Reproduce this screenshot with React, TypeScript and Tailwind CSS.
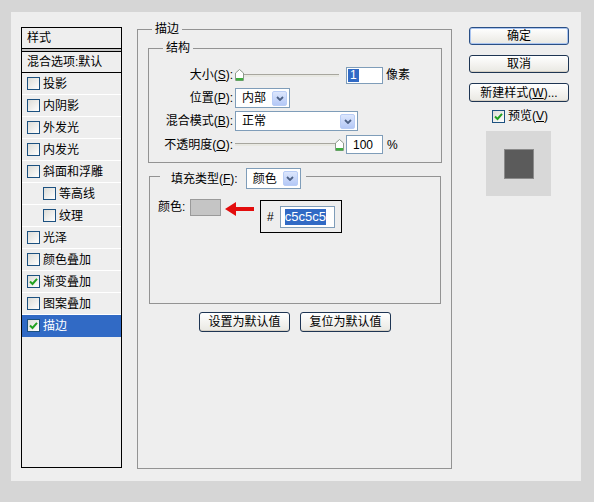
import type { ReactNode } from "react"

function Check({ checked }: { checked?: boolean }) {
  return (
    <span className="flex h-[13px] w-[13px] shrink-0 items-center justify-center border border-[#1c5180] bg-linear-to-br from-[#dcdcd7] to-white">
      {checked && (
        <svg width="9" height="9" viewBox="0 0 9 9">
          <path d="M1 4.5 L3.5 7 L8 1.8" fill="none" stroke="#21a121" strokeWidth="2" />
        </svg>
      )}
    </span>
  )
}

function Row({ label, checked, indent, selected }: { label: string; checked?: boolean; indent?: boolean; selected?: boolean }) {
  return (
    <div
      className={`flex h-[22px] items-center gap-[3px] border-b ${indent ? "pl-[21px]" : "pl-[5px]"} ${
        selected ? "border-[#316ac5] bg-[#316ac5] text-white" : "border-white"
      }`}
    >
      <Check checked={checked} />
      <span>{label}</span>
    </div>
  )
}

function DropBtn() {
  return (
    <span className="flex h-[15px] w-[15px] items-center justify-center rounded-[2px] border border-[#b9cdf6] bg-linear-to-b from-[#dde7fd] to-[#b4c8f6]">
      <svg width="8" height="5" viewBox="0 0 8 5">
        <path d="M1 1 L4 4 L7 1" fill="none" stroke="#4d6185" strokeWidth="1.8" />
      </svg>
    </span>
  )
}

function Select({ className, text }: { className: string; text: string }) {
  return (
    <div className={`flex items-center justify-between border border-[#7f9db9] bg-white pl-[6px] pr-[2px] ${className}`}>
      <span>{text}</span>
      <DropBtn />
    </div>
  )
}

function Thumb() {
  return (
    <svg width="9" height="12" viewBox="0 0 9 12" className="shrink-0">
      <path d="M0.5 4 L4.5 0.5 L8.5 4 V11.5 H0.5 Z" fill="#ffffff" stroke="#8c9a8c" />
      <rect x="1" y="9" width="7" height="2.5" fill="#3dae3d" />
    </svg>
  )
}

function Slider({ className, end }: { className: string; end?: boolean }) {
  return (
    <div className={`flex items-center ${className}`}>
      {end && <span className="h-[3px] flex-1 border-t border-[#a7a69e] border-b-white bg-[#e8e8e2]" />}
      <Thumb />
      {!end && <span className="h-[3px] flex-1 border-t border-[#a7a69e] border-b-white bg-[#e8e8e2]" />}
    </div>
  )
}

function Group({ legend, className, legendClass, children }: { legend: ReactNode; className: string; legendClass: string; children: ReactNode }) {
  return (
    <div className={`relative border border-[#939393] ${className}`}>
      <div className={`absolute flex items-center bg-[#eeeeee] ${legendClass}`}>{legend}</div>
      {children}
    </div>
  )
}

function Btn({ children, primary, className }: { children: ReactNode; primary?: boolean; className: string }) {
  return (
    <div
      className={`flex items-center justify-center rounded-[3px] border bg-linear-to-b from-white to-[#e9e8e2] leading-none ${
        primary ? "border-[#2a4f85] shadow-[inset_0_0_0_1px_#a9c4f0]" : "border-[#1e3553] shadow-[inset_0_-1px_0_#d6d0c5]"
      } ${className}`}
    >
      {children}
    </div>
  )
}

export default function App() {
  const rows = [
    { label: "投影" },
    { label: "内阴影" },
    { label: "外发光" },
    { label: "内发光" },
    { label: "斜面和浮雕" },
    { label: "等高线", indent: true },
    { label: "纹理", indent: true },
    { label: "光泽" },
    { label: "颜色叠加" },
    { label: "渐变叠加", checked: true },
    { label: "图案叠加" },
    { label: "描边", checked: true, selected: true },
  ]

  return (
    <div className="h-[502px] w-[594px] bg-[#d6d6d6] pl-[11px] pt-[12px] font-['Liberation_Sans','Noto_Sans_CJK_SC',sans-serif] text-[12px] text-black">
      <div className="flex h-[469px] w-[570px] bg-[#eeeeee] pl-[10px] pt-[15px]">
        {/* style list */}
        <div className="h-[441px] w-[101px] shrink-0 border border-black">
          <div className="flex h-[21px] items-center border-b border-black pl-[5px]">样式</div>
          <div className="h-[2px] bg-[#c4c4c4]" />
          <div className="flex h-[22px] items-center border-y border-black pl-[5px]">混合选项:默认</div>
          {rows.map((r) => (
            <Row key={r.label} {...r} />
          ))}
        </div>

        {/* stroke settings */}
        <Group
          legend={<span className="px-[3px] leading-[16px]">描边</span>}
          className="ml-[15px] mt-[2px] h-[440px] w-[315px] shrink-0 pl-[10px] pr-[9px] pt-[18px]"
          legendClass="-top-[9px] left-[14px]"
        >
          <Group
            legend={<span className="px-[3px] leading-[16px]">结构</span>}
            className="h-[115px] pt-[17px]"
            legendClass="-top-[9px] left-[14px]"
          >
            <div className="flex h-[18px] items-center">
              <span className="w-[84px] text-right">
                大小(<u>S</u>):
              </span>
              <Slider className="ml-[2px] w-[104px]" />
              <div className="ml-[7px] flex h-[17px] w-[37px] items-center border border-[#7f9db9] bg-white pl-[1px]">
                <span className="h-[13px] bg-[#316ac5] px-[2px] leading-[13px] text-white">1</span>
              </div>
              <span className="ml-[3px]">像素</span>
            </div>
            <div className="mt-[4px] flex h-[20px] items-center">
              <span className="w-[84px] text-right">
                位置(<u>P</u>):
              </span>
              <Select className="ml-[2px] h-[20px] w-[55px]" text="内部" />
            </div>
            <div className="mt-[3px] flex h-[20px] items-center">
              <span className="w-[84px] text-right">
                混合模式(<u>B</u>):
              </span>
              <Select className="ml-[2px] h-[20px] w-[123px]" text="正常" />
            </div>
            <div className="mt-[4px] flex h-[19px] items-center">
              <span className="w-[84px] text-right">
                不透明度(<u>O</u>):
              </span>
              <Slider className="ml-[2px] w-[109px]" end />
              <div className="ml-[2px] flex h-[19px] w-[37px] items-center border border-[#7f9db9] bg-white pl-[6px]">
                100
              </div>
              <span className="ml-[4px]">%</span>
            </div>
          </Group>

          <Group
            legend={
              <>
                <span className="pl-[11px] pr-[8px]">
                  填充类型(<u>F</u>):
                </span>
                <Select className="h-[21px] w-[55px]" text="颜色" />
                <span className="w-[5px]" />
              </>
            }
            className="ml-[1px] mt-[13px] h-[128px] w-[292px] pt-[22px]"
            legendClass="-top-[9px] left-[10px]"
          >
            <div className="flex items-start pl-[8px]">
              <span className="w-[32px] leading-[17px]">颜色:</span>
              <span className="h-[17px] w-[31px] border border-[#9a9a9a] bg-[#c5c5c5]" />
              <svg width="30" height="14" viewBox="0 0 30 14" className="ml-[4px] mt-[3px]">
                <path d="M0 7 L11 0 L11 5 H29 V9 H11 V14 Z" fill="#e30d0d" />
              </svg>
              <div className="ml-[5px] mt-[1px] flex h-[33px] w-[82px] items-center border border-black pl-[6px]">
                <span>#</span>
                <div className="ml-[6px] flex h-[22px] w-[55px] items-center border border-[#7f9db9] bg-white pl-[4px]">
                  <span className="bg-[#316ac5] text-[13px] leading-[16px] text-white">c5c5c5</span>
                </div>
              </div>
            </div>
          </Group>

          <div className="ml-[51px] mt-[8px] flex gap-[10px]">
            <Btn className="h-[20px] w-[91px]">设置为默认值</Btn>
            <Btn className="h-[20px] w-[91px]">复位为默认值</Btn>
          </div>
        </Group>

        {/* buttons */}
        <div className="ml-[17px] flex w-[100px] flex-col">
          <Btn primary className="h-[18px] w-[100px]">
            确定
          </Btn>
          <Btn className="mt-[10px] h-[18px] w-[100px]">取消</Btn>
          <Btn className="mt-[10px] h-[19px] w-[100px]">
            新建样式(<u>W</u>)...
          </Btn>
          <div className="mt-[6px] flex h-[16px] items-center gap-[3px] pl-[23px]">
            <Check checked />
            <span>
              预览(<u>V</u>)
            </span>
          </div>
          <div className="ml-[17px] mt-[7px] flex h-[65px] w-[65px] items-center justify-center bg-[#d8d8d8]">
            <span className="h-[30px] w-[30px] border border-[#8a8a8a] bg-[#5b5b5b]" />
          </div>
        </div>
      </div>
    </div>
  )
}
